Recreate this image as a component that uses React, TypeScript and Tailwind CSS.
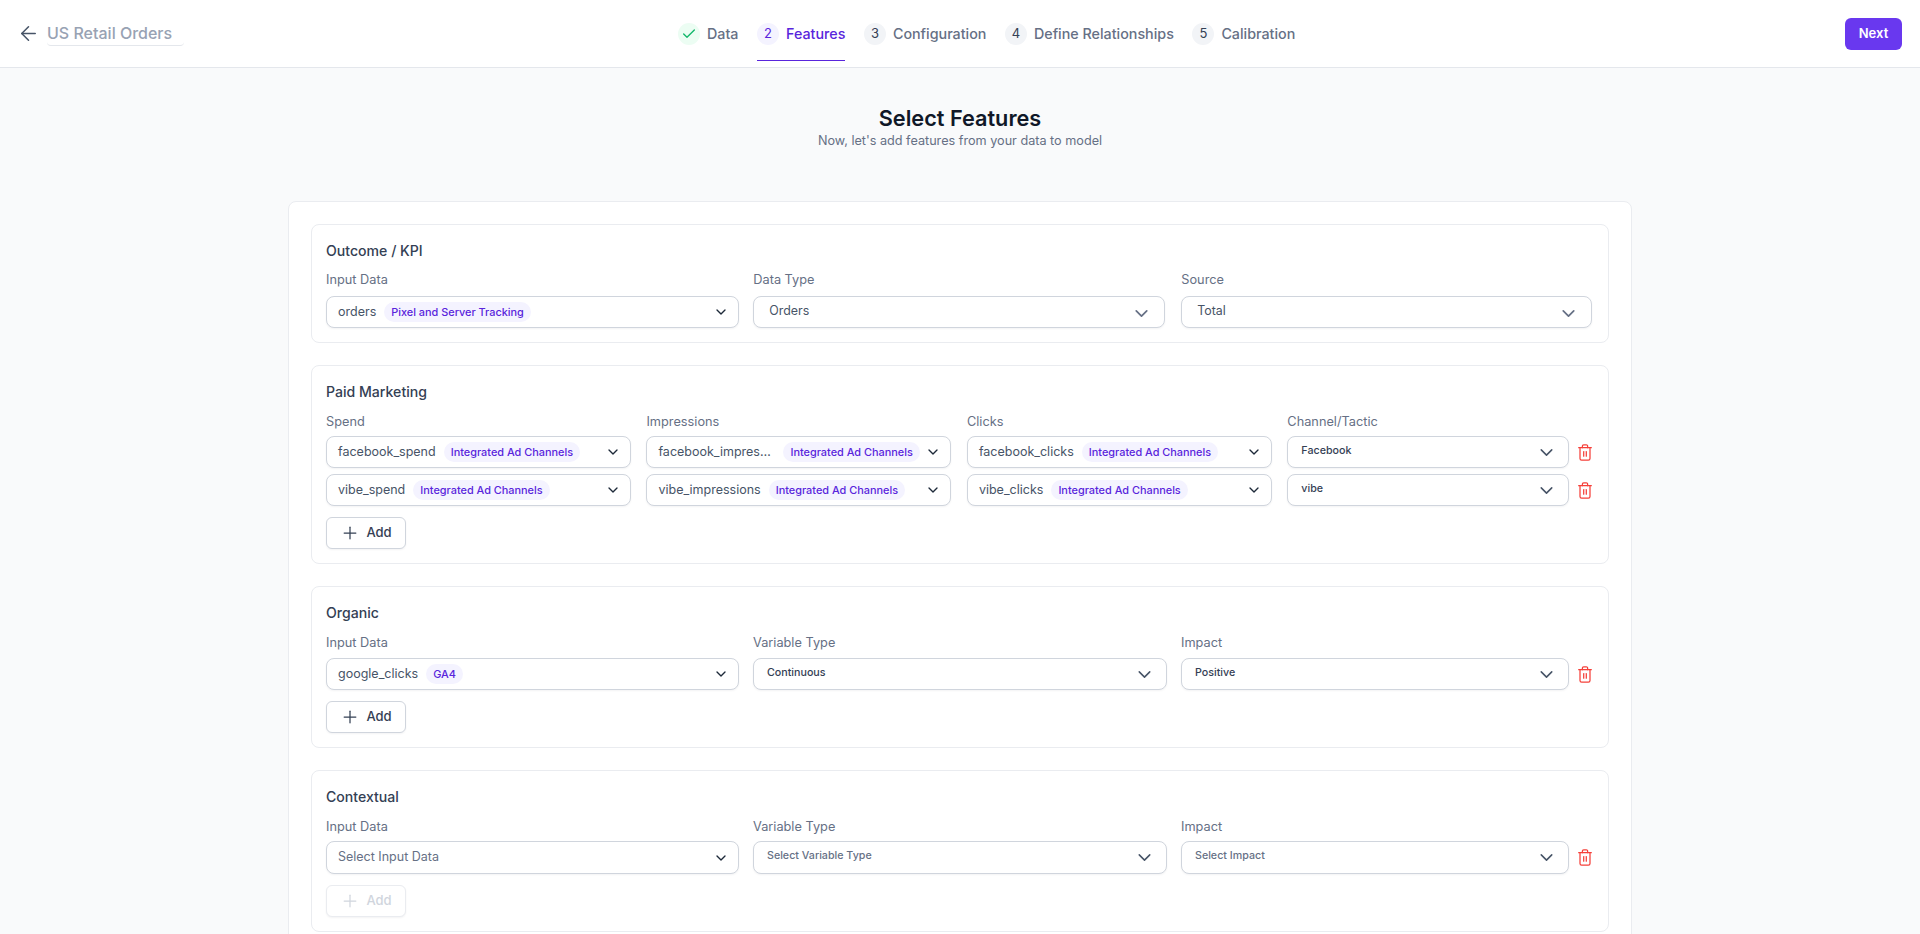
import React from "react";
import { ArrowLeft, Check, ChevronDown, Plus } from "lucide-react";

const SELECT_BASE =
  "w-full min-w-0 flex items-center rounded-lg border border-[#d0d5dd] bg-white shadow-[0_1px_2px_rgba(16,24,40,0.05)]";

function Badge({ children }: { children: React.ReactNode }) {
  return (
    <span className="ml-2 shrink-0 rounded-full bg-[#f4f3ff] px-[7px] h-5 flex items-center text-[10.9px] font-medium text-[#5925dc] leading-none">
      {children}
    </span>
  );
}

type SelectProps = {
  value: string;
  badge?: string;
  kind?: "data" | "plain" | "small";
  muted?: boolean;
  tall?: boolean;
  truncate?: boolean;
};

function Select({ value, badge, kind = "data", muted, tall, truncate }: SelectProps) {
  const height = tall ? "h-[33px]" : "h-8";
  if (kind === "data") {
    return (
      <div className={`${height} ${SELECT_BASE} pl-[11px] pr-[9px]`}>
        <div className="flex flex-1 min-w-0 items-center">
          <span className={`text-[12.5px] ${muted ? "text-[#667085]" : "text-[#475467]"} ${truncate ? "w-[117px] truncate" : "whitespace-nowrap"}`}>{value}</span>
          {badge && <Badge>{badge}</Badge>}
        </div>
        <ChevronDown size={16} strokeWidth={2} className="shrink-0 text-[#1d2939]" />
      </div>
    );
  }
  if (kind === "plain") {
    return (
      <div className={`${height} ${SELECT_BASE} justify-between pl-[15px] pr-[12px]`}>
        <span className="text-[12.4px] text-[#475467] -translate-y-px">{value}</span>
        <ChevronDown size={21} strokeWidth={2} className="shrink-0 text-[#667085] translate-y-px" />
      </div>
    );
  }
  return (
    <div className={`${height} ${SELECT_BASE} justify-between pl-[13px] pr-[11px]`}>
      <span className={`text-[10.7px] font-medium -translate-y-px ${muted ? "text-[#667085]" : "text-[#344054]"}`}>{value}</span>
      <ChevronDown size={21} strokeWidth={1.75} className="shrink-0 text-[#475467]" />
    </div>
  );
}

function Label({ gap = "mb-2", children }: { gap?: string; children: React.ReactNode }) {
  return <div className={`${gap} h-[17px] text-[12.75px] leading-[17px] text-[#667085]`}>{children}</div>;
}

function Trash() {
  return (
    <svg width="14" height="17" viewBox="0 0 14 17" fill="none" stroke="#f5403a" strokeWidth="1.25" strokeLinecap="round" strokeLinejoin="round" className="shrink-0">
      <path d="M0.7 3.7H13.3" />
      <path d="M4.4 3.7V2.1A1.3 1.3 0 0 1 5.7 0.8H8.3A1.3 1.3 0 0 1 9.6 2.1V3.7" />
      <path d="M2 3.7V14.6A1.6 1.6 0 0 0 3.6 16.2H10.4A1.6 1.6 0 0 0 12 14.6V3.7" />
      <path d="M5.7 7.6V12.2" />
      <path d="M8.3 7.6V12.2" />
    </svg>
  );
}

function WithTrash({ children }: { children: React.ReactNode }) {
  return (
    <div className="flex items-center gap-[9px]">
      <div className="min-w-0 flex-1">{children}</div>
      <Trash />
    </div>
  );
}

function AddButton({ disabled }: { disabled?: boolean }) {
  return (
    <button
      className={`mt-[11px] flex h-8 w-20 items-center justify-center gap-[6px] rounded-md border bg-white text-[13px] font-medium shadow-[0_1px_2px_rgba(16,24,40,0.05)] ${
        disabled ? "border-[#eaecf0] text-[#d0d5dd]" : "border-[#d0d5dd] text-[#344054]"
      }`}
    >
      <Plus size={20} strokeWidth={1.5} />
      Add
    </button>
  );
}

function Section({ title, titleGap, children }: { title: string; titleGap: string; children: React.ReactNode }) {
  return (
    <section className="rounded-lg border border-[#eaecf0] bg-white pl-[14px] pr-[16px] pb-[14px] pt-[16px]">
      <h2 className={`${titleGap} h-[20px] text-[14.1px] font-medium leading-[20px] text-[#344054]`}>{title}</h2>
      {children}
    </section>
  );
}

function Step({ n, label, done, active }: { n: string; label: string; done?: boolean; active?: boolean }) {
  return (
    <div className={`relative flex h-[67px] items-center gap-[7px] ${active ? "text-[#5925dc]" : "text-[#667085]"}`}>
      <span
        className={`flex h-[22px] w-[22px] items-center justify-center rounded-full text-[13px] ${
          done ? "bg-[#ecfdf3] text-[#12b76a]" : active ? "bg-[#f4f3ff] text-[#5925dc]" : "bg-[#f2f4f7] text-[#344054]"
        }`}
      >
        {done ? <Check size={16} strokeWidth={2} /> : n}
      </span>
      <span className="text-[14.3px] font-medium whitespace-nowrap">{label}</span>
      {active && <span className="absolute bottom-[6px] left-0 right-0 h-px bg-[#5925dc]" />}
    </div>
  );
}

function PaidColumn({ label, children }: { label: string; children: React.ReactNode }) {
  return (
    <div>
      <Label gap="mb-[6px]">{label}</Label>
      <div className="flex flex-col gap-[6px]">{children}</div>
    </div>
  );
}

export default function App() {
  return (
    <div className="h-[934px] overflow-hidden bg-[#f9fafb]" style={{ fontFamily: "Inter, 'Noto Sans', sans-serif" }}>
      <header className="relative flex h-[68px] items-center justify-between border-b border-[#e4e7ec] bg-white pl-[17px] pr-[18px]">
        <div className="flex items-center gap-[7px]">
          <ArrowLeft size={23} strokeWidth={1.6} className="text-[#475467]" />
          <div className="mt-[1px] w-[137px] rounded-b border-b border-[#e4e7ec] pb-[1px] text-[16px] font-medium leading-[22px] text-[#98a2b3]">US Retail Orders</div>
        </div>
        <nav className="absolute left-[678px] top-0 flex gap-[18.5px]">
          <Step n="1" label="Data" done />
          <Step n="2" label="Features" active />
          <Step n="3" label="Configuration" />
          <Step n="4" label="Define Relationships" />
          <Step n="5" label="Calibration" />
        </nav>
        <button className="flex h-8 w-[57px] items-center justify-center rounded-md bg-[#6938ef] text-[13px] font-semibold text-white">Next</button>
      </header>

      <main>
        <div className="pt-[36px] text-center">
          <h1 className="text-[21.7px] font-semibold leading-[28px] text-[#101828]">Select Features</h1>
          <p className="text-[12.65px] leading-[18px] text-[#667085]">Now, let's add features from your data to model</p>
        </div>

        <div className="mx-auto mt-[51px] flex w-[1344px] flex-col gap-[22px] rounded-lg border border-[#eaecf0] bg-white p-[22px]">
          <Section title="Outcome / KPI" titleGap="mb-[10px]">
            <div className="flex">
              <div className="w-[412.7px]">
                <Label>Input Data</Label>
                <Select value="orders" badge="Pixel and Server Tracking" />
              </div>
              <div className="ml-[14.6px] w-[411.4px]">
                <Label>Data Type</Label>
                <Select kind="plain" value="Orders" />
              </div>
              <div className="ml-[16.6px] flex-1">
                <Label>Source</Label>
                <Select kind="plain" value="Total" />
              </div>
            </div>
          </Section>

          <Section title="Paid Marketing" titleGap="mb-[11px]">
            <div className="grid grid-cols-4 gap-x-[15.8px]">
              <PaidColumn label="Spend">
                <Select value="facebook_spend" badge="Integrated Ad Channels" />
                <Select value="vibe_spend" badge="Integrated Ad Channels" />
              </PaidColumn>
              <PaidColumn label="Impressions">
                <Select value="facebook_impressions" truncate badge="Integrated Ad Channels" />
                <Select value="vibe_impressions" badge="Integrated Ad Channels" />
              </PaidColumn>
              <PaidColumn label="Clicks">
                <Select value="facebook_clicks" badge="Integrated Ad Channels" />
                <Select value="vibe_clicks" badge="Integrated Ad Channels" />
              </PaidColumn>
              <PaidColumn label="Channel/Tactic">
                <WithTrash>
                  <Select kind="small" value="Facebook" />
                </WithTrash>
                <WithTrash>
                  <Select kind="small" value="vibe" />
                </WithTrash>
              </PaidColumn>
            </div>
            <AddButton />
          </Section>

          <Section title="Organic" titleGap="mb-[11px]">
            <div className="grid grid-cols-[412.5px_413.5px_1fr] gap-x-[14.5px]">
              <div>
                <Label gap="mb-[7px]">Input Data</Label>
                <Select value="google_clicks" badge="GA4" />
              </div>
              <div>
                <Label gap="mb-[7px]">Variable Type</Label>
                <Select kind="small" value="Continuous" />
              </div>
              <div>
                <Label gap="mb-[7px]">Impact</Label>
                <WithTrash>
                  <Select kind="small" value="Positive" />
                </WithTrash>
              </div>
            </div>
            <AddButton />
          </Section>

          <Section title="Contextual" titleGap="mb-[11px]">
            <div className="grid grid-cols-[412.5px_413.5px_1fr] gap-x-[14.5px]">
              <div>
                <Label gap="mb-[6px]">Input Data</Label>
                <Select value="Select Input Data" muted tall />
              </div>
              <div>
                <Label gap="mb-[6px]">Variable Type</Label>
                <Select kind="small" value="Select Variable Type" muted tall />
              </div>
              <div>
                <Label gap="mb-[6px]">Impact</Label>
                <WithTrash>
                  <Select kind="small" value="Select Impact" muted tall />
                </WithTrash>
              </div>
            </div>
            <AddButton disabled />
          </Section>
        </div>
      </main>
    </div>
  );
}
